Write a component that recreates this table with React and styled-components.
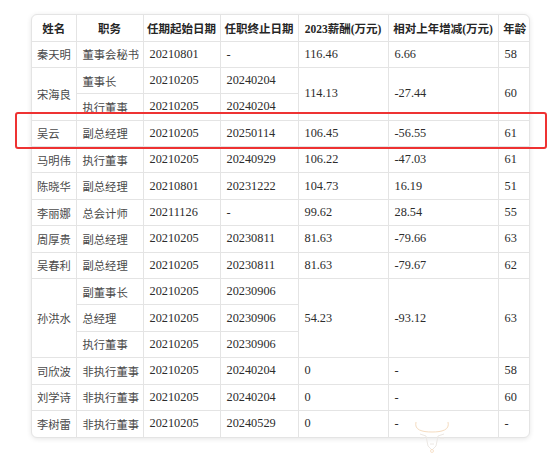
import React from "react";
import styled, { createGlobalStyle } from "styled-components";

const GlobalStyle = createGlobalStyle`
  html, body {
    margin: 0;
    padding: 0;
    background: #ffffff;
  }
  body {
    font-family: "Liberation Serif", "Noto Sans CJK SC", serif;
  }
`;

const COLS = [44, 67, 77, 78, 90, 110, 33];

const HEAD = ["姓名", "职务", "任期起始日期", "任职终止日期", "2023薪酬(万元)", "相对上年增减(万元)", "年龄"];

const PEOPLE = [
  { name: "秦天明", roles: [["董事会秘书", "20210801", "-"]], pay: "116.46", diff: "6.66", age: "58" },
  {
    name: "宋海良",
    roles: [
      ["董事长", "20210205", "20240204"],
      ["执行董事", "20210205", "20240204"],
    ],
    pay: "114.13",
    diff: "-27.44",
    age: "60",
  },
  { name: "吴云", roles: [["副总经理", "20210205", "20250114"]], pay: "106.45", diff: "-56.55", age: "61" },
  { name: "马明伟", roles: [["执行董事", "20210205", "20240929"]], pay: "106.22", diff: "-47.03", age: "61" },
  { name: "陈晓华", roles: [["副总经理", "20210801", "20231222"]], pay: "104.73", diff: "16.19", age: "51" },
  { name: "李丽娜", roles: [["总会计师", "20211126", "-"]], pay: "99.62", diff: "28.54", age: "55" },
  { name: "周厚贵", roles: [["副总经理", "20210205", "20230811"]], pay: "81.63", diff: "-79.66", age: "63" },
  { name: "吴春利", roles: [["副总经理", "20210205", "20230811"]], pay: "81.63", diff: "-79.67", age: "62" },
  {
    name: "孙洪水",
    roles: [
      ["副董事长", "20210205", "20230906"],
      ["总经理", "20210205", "20230906"],
      ["执行董事", "20210205", "20230906"],
    ],
    pay: "54.23",
    diff: "-93.12",
    age: "63",
  },
  { name: "司欣波", roles: [["非执行董事", "20210205", "20240204"]], pay: "0", diff: "-", age: "58" },
  { name: "刘学诗", roles: [["非执行董事", "20210205", "20240204"]], pay: "0", diff: "-", age: "60" },
  { name: "李树雷", roles: [["非执行董事", "20210205", "20240529"]], pay: "0", diff: "-", age: "-" },
];

export default function App() {
  return (
    <Page>
      <GlobalStyle />
      <Card>
        <Table>
          <colgroup>
            {COLS.map((w, i) => (
              <col key={i} style={{ width: w }} />
            ))}
          </colgroup>
          <thead>
            <HeadRow>
              {HEAD.map((h) => (
                <Th key={h}>{h}</Th>
              ))}
            </HeadRow>
          </thead>
          <tbody>
            {PEOPLE.map((p) =>
              p.roles.map((r, i) => (
                <Row key={p.name + i}>
                  {i === 0 && (
                    <Td rowSpan={p.roles.length} $first>
                      {p.name}
                    </Td>
                  )}
                  <Td>{r[0]}</Td>
                  <Td $num>{r[1]}</Td>
                  <Td $num>{r[2]}</Td>
                  {i === 0 && (
                    <>
                      <Td $num rowSpan={p.roles.length}>{p.pay}</Td>
                      <Td $num rowSpan={p.roles.length}>{p.diff}</Td>
                      <Td $num rowSpan={p.roles.length}>{p.age}</Td>
                    </>
                  )}
                </Row>
              ))
            )}
          </tbody>
        </Table>
      </Card>

      {/* red highlight round the 吴云 row */}
      <Highlight />

      <Watermark viewBox="0 0 40 38" aria-hidden="true">
        <path d="M4 6 C2 14 10 16 20 16 C30 16 38 14 36 6" fill="none" stroke="#f5dcc0" strokeWidth="1" />
        <path d="M8 18 L14 20 L16 30 L20 34 L24 30 L26 20 L32 18" fill="none" stroke="#ece8e4" strokeWidth="1" />
        <path d="M12 22 L8 22 M28 22 L32 22 M18 28 L22 28" fill="none" stroke="#ece8e4" strokeWidth="1" />
        <circle cx="20" cy="35" r="1.5" fill="none" stroke="#f5dcc0" strokeWidth="0.8" />
      </Watermark>
    </Page>
  );
}

const Page = styled.div`
  position: relative;
  width: 550px;
  height: 453px;
  padding: 14px 0 0 31px;
  box-sizing: border-box;
  overflow: hidden;
  background: #fff;
`;

const Card = styled.div`
  width: 499px;
  border: 1px solid #e4e4e4;
  border-radius: 6px;
  overflow: hidden;
  box-sizing: border-box;
  box-shadow: 0 1px 5px rgba(0, 0, 0, 0.1);
  background: #fff;
`;

const Table = styled.table`
  width: 100%;
  table-layout: fixed;
  border-collapse: collapse;
  border-style: hidden;
`;

const HeadRow = styled.tr`
  height: 26px;
`;

const Row = styled.tr`
  height: 26.4px;
`;

const Th = styled.th`
  border: 1px solid #e4e4e4;
  padding: 0;
  text-align: center;
  font-size: 11.5px;
  font-weight: 700;
  color: #262626;
  white-space: nowrap;
  vertical-align: middle;
`;

const Td = styled.td`
  border: 1px solid #e4e4e4;
  padding: 0 0 0 ${(p) => (p.$first ? "5px" : "6px")};
  text-align: left;
  font-size: ${(p) => (p.$num ? "12.3px" : "11.3px")};
  color: ${(p) => (p.$num ? "#2c2c2c" : "#4a4a4a")};
  white-space: nowrap;
  overflow: hidden;
  vertical-align: middle;
`;

const Highlight = styled.div`
  position: absolute;
  left: 15px;
  top: 112px;
  width: 532px;
  height: 37px;
  box-sizing: border-box;
  border: 2px solid #ee3232;
  border-radius: 3px;
  pointer-events: none;
`;

const Watermark = styled.svg`
  position: absolute;
  left: 412px;
  top: 416px;
  width: 40px;
  height: 38px;
`;
